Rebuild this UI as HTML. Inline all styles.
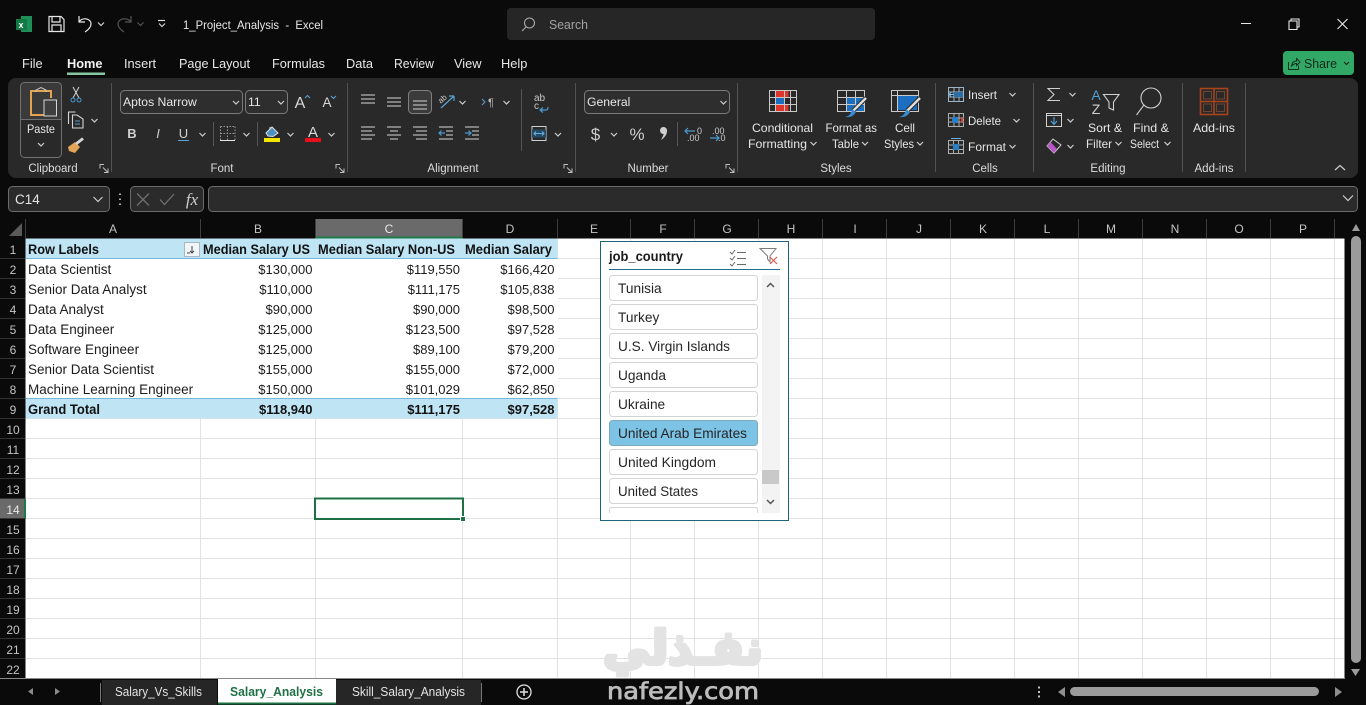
<!DOCTYPE html>
<html lang="en"><head><meta charset="utf-8"><title>1_Project_Analysis - Excel</title>
<style>
html,body{margin:0;padding:0;background:#0a0a0a;width:1366px;height:705px;overflow:hidden}
svg{display:block}
text{font-family:"Liberation Sans",sans-serif;font-size:12px;fill:#e6e6e6;white-space:pre}
.r{font-size:12.5px}
.g{fill:#dcdcdc;font-size:11.5px;text-anchor:middle}
.m{text-anchor:middle}
.e{text-anchor:end}
.tab{font-size:12.8px;fill:#e8e8e8}
.c{font-size:13.5px;fill:#1c1c1c}
.n{font-size:13px;fill:#1c1c1c;text-anchor:end}
.b{font-weight:bold;fill:#111}
.h{font-size:12px;fill:#c4c4c4;text-anchor:middle}
.s{font-size:13.7px;fill:#252525}
.ln{fill:none;stroke:#d6d6d6;stroke-width:1.1}
.bl{fill:none;stroke:#4a9ad0;stroke-width:1.2}
</style></head><body>
<svg width="1366" height="705" viewBox="0 0 1366 705" xmlns="http://www.w3.org/2000/svg">
<defs>
<path id="c" d="M-3-1.5 0 1.5 3-1.5" fill="none" stroke="#cfcfcf" stroke-width="1.2"/>
<path id="l" d="M-4 0V-4H0M-1-1 4 4M4 0V4H0" fill="none" stroke="#bdbdbd" stroke-width="1"/>
<path id="al" d="M-7 0H7M-7 4H7M-7 8H7" fill="none" stroke="#d6d6d6" stroke-width="1.1"/>
</defs>
<rect width="1366" height="705" fill="#0a0a0a"/>

<!-- title bar -->
<rect x="21" y="16" width="11" height="16" fill="#1f8f5a"/><rect x="16" y="19" width="11" height="11" fill="#127a44"/>
<text x="18.500" y="28" style="font-size:9px;font-weight:bold;fill:#fff">x</text>
<path d="M49 16.500H61L64 19.500V31.500H49ZM52 16.500V22H60V16.500M52 31.500V25H61V31.500" fill="none" stroke="#e6e6e6" stroke-width="1.2"/>
<path d="M79 16V22H85M79 22C82 17 91 18 91 24 91 27 88 30 85 32" fill="none" stroke="#e6e6e6" stroke-width="1.2"/>
<use href="#c" x="101" y="24"/>
<path d="M131 16V22H125M131 22C128 17 118 18 118 24 118 27 121 30 124 32" fill="none" stroke="#555" stroke-width="1.2"/>
<path d="M137.500 22.500 140.500 25.500 143.500 22.500" fill="none" stroke="#555" stroke-width="1.2"/>
<path d="M158 20.500H165" stroke="#ddd" stroke-width="1.2"/><use href="#c" x="162" y="25"/>
<text x="183" y="29" textLength="140" lengthAdjust="spacingAndGlyphs" style="font-size:12.300px;fill:#e8e8e8">1_Project_Analysis  -  Excel</text>
<rect x="507" y="8" width="368" height="32" rx="4" fill="#262626"/>
<circle cx="529.500" cy="23" r="5" fill="none" stroke="#a8a8a8" stroke-width="1.100"/><path d="M526 27 522 31" stroke="#a8a8a8" stroke-width="1.100"/>
<text x="549" y="29" textLength="39" lengthAdjust="spacingAndGlyphs" style="font-size:13px;fill:#a3a3a3">Search</text>
<path d="M1241 23.500H1251M1289 21H1297V29.500H1289ZM1291 21V19H1299V27H1297M1337.500 19 1347.500 29M1347.500 19 1337.500 29" fill="none" stroke="#e8e8e8" stroke-width="1.100"/>

<!-- tabs -->
<text x="22" y="68" class="tab">File</text>
<text x="67" y="68" class="tab" style="font-weight:bold;fill:#f2f2f2">Home</text>
<rect x="67" y="72.500" width="38" height="2.500" fill="#86c7a2"/>
<text x="124" y="68" class="tab">Insert</text>
<text x="179" y="68" class="tab" textLength="71" lengthAdjust="spacingAndGlyphs">Page Layout</text>
<text x="272" y="68" class="tab" textLength="53" lengthAdjust="spacingAndGlyphs">Formulas</text>
<text x="346" y="68" class="tab">Data</text>
<text x="394" y="68" class="tab" textLength="40" lengthAdjust="spacingAndGlyphs">Review</text>
<text x="454" y="68" class="tab">View</text>
<text x="501" y="68" class="tab">Help</text>
<rect x="1283" y="51" width="71" height="24" rx="4" fill="#31a866"/>
<path d="M1288.500 62V69.500H1298.500V65.500M1291.500 66C1292 62.500 1294 61 1296.500 61V58.500L1300 62 1296.500 65.500V63.500C1294.500 63.500 1293 64.500 1291.500 66Z" fill="none" stroke="#14301f" stroke-width="1"/>
<text x="1304" y="68" textLength="33" lengthAdjust="spacingAndGlyphs" style="font-size:13px;fill:#10271a">Share</text>
<path d="M1344 62 1346.500 64.500 1349 62" fill="none" stroke="#10271a" stroke-width="1.100"/>

<!-- ribbon -->
<rect x="8" y="78" width="1350" height="100" rx="8" fill="#292929"/>
<path d="M111.500 83V172M347.500 83V172M575.500 83V172M737.500 83V172M935.500 83V172M1033.500 83V172M1182.500 83V172M1245.500 83V172" stroke="#525252"/>

<!-- clipboard -->
<path d="M20 119.500V86Q20 82 24 82H58Q62 82 62 86V119.500Z" fill="#3a3a3a"/>
<rect x="20.500" y="82.500" width="41" height="75" rx="4" fill="none" stroke="#707070"/>
<path d="M20.500 119.500H61.500" stroke="#707070"/>
<path d="M44 115H31V91H51V98" fill="none" stroke="#e2a24f" stroke-width="2"/>
<path d="M36 92V90L41 87.500 46 90V92" fill="none" stroke="#cfcfcf"/>
<rect x="44" y="100" width="12.500" height="16" fill="#3f3f3f" stroke="#d5d5d5"/>
<text x="41" y="133" class="m" textLength="28" lengthAdjust="spacingAndGlyphs">Paste</text><use href="#c" x="41" y="144.500"/>
<path d="M73 87 79 98M79 87 73 98" stroke="#d4d4d4" fill="none"/><circle cx="73" cy="100" r="2" fill="none" stroke="#4a9ad0"/><circle cx="79" cy="100" r="2" fill="none" stroke="#4a9ad0"/>
<path d="M68.500 125V113H75.500M72.500 116H77L83 120V129H72.500Z" class="ln" transform="translate(0 -1)"/><path d="M75 121H80M75 124H80" stroke="#5b9bc9"/>
<use href="#c" x="94.500" y="120.500"/>
<path d="M68 147 75 142 80 147 75 153 69 151Z" fill="#e1a459"/><path d="M76 144 83 138.500" stroke="#d6d6d6" stroke-width="2.800"/>
<text x="53" y="172" class="g">Clipboard</text><use href="#l" x="104" y="168.500"/>

<!-- font -->
<rect x="120.500" y="90.500" width="122" height="23" rx="4" fill="#2e2e2e" stroke="#7a7a7a"/>
<text x="123" y="106" style="font-size:12.200px">Aptos Narrow</text><use href="#c" x="236" y="102.500"/>
<rect x="245.500" y="90.500" width="42" height="23" rx="4" fill="#2e2e2e" stroke="#7a7a7a"/>
<text x="248" y="106" style="font-size:12.200px">11</text><use href="#c" x="281" y="102.500"/>
<text x="300" y="108" class="m" style="font-size:16px;fill:#d8d8d8">A</text><path d="M305 98 307.500 95.500 310 98" fill="none" stroke="#5aa4d6"/>
<text x="327" y="107" class="m" style="font-size:13.500px;fill:#d8d8d8">A</text><path d="M331 96 333.500 98.500 336 96" fill="none" stroke="#5aa4d6"/>
<text x="132" y="138" class="m" style="font-size:13px;font-weight:bold;fill:#cfcfcf">B</text>
<text x="158" y="138" class="m" style="font-size:13px;font-style:italic;fill:#cfcfcf">I</text>
<text x="183.500" y="138" class="m" style="font-size:13px;fill:#cfcfcf">U</text><path d="M178 140.500H189" stroke="#5aa4d6"/>
<use href="#c" x="202.500" y="134.500"/>
<path d="M213.500 122V146M257.500 122V146" stroke="#555"/>
<path d="M220.500 126.500H235M220.500 126.500V140M235 126.500V140M227.500 126.500V140M220.500 133.500H235" fill="none" stroke="#999" stroke-dasharray="1.500 1.500"/><path d="M220 140.500H235" stroke="#e6e6e6"/>
<use href="#c" x="246.500" y="134.500"/>
<path d="M266 133 272 127 278 133 273 136.500 268 136Z" fill="#4c8fc0" stroke="#e0e0e0"/><path d="M270 129V127" stroke="#e0e0e0"/>
<rect x="264" y="138" width="16" height="4" fill="#f4e600"/>
<use href="#c" x="290.500" y="134.500"/>
<text x="313" y="137" class="m" style="font-size:15px;fill:#d8d8d8">A</text>
<rect x="305" y="138" width="16" height="4" fill="#e8101a"/>
<use href="#c" x="331.500" y="134.500"/>
<text x="222" y="172" class="g">Font</text><use href="#l" x="340" y="168.500"/>

<!-- alignment -->
<use href="#al" x="368" y="95"/>
<use href="#al" x="394" y="98"/>
<rect x="408.500" y="90.500" width="23" height="23" rx="4" fill="#3b3b3b" stroke="#808080"/>
<use href="#al" x="420" y="101"/>
<path d="M441 108 454 96M454 96H449M454 96V101" fill="none" stroke="#5aa4d6" stroke-width="1.200"/>
<text x="444" y="101" class="m" style="font-size:8px;fill:#ccc" transform="rotate(-40 444 101)">ab</text>
<use href="#c" x="462.500" y="102.500"/>
<path d="M482 99 485 102 482 105" fill="none" stroke="#5aa4d6"/><text x="491" y="106" class="m" style="font-size:11px;fill:#bbb">¶</text>
<use href="#c" x="506.500" y="102.500"/>
<path d="M361 127H375M361 131H372M361 135H375M361 139H372" class="ln"/>
<path d="M387 127H401M390 131H398M387 135H401M390 139H398" class="ln"/>
<path d="M413 127H427M416 131H427M413 135H427M416 139H427" class="ln"/>
<path d="M439 127H453M446 131H453M446 135H453M439 139H453" class="ln"/><path d="M445 133H439M441.500 130.500 439 133 441.500 135.500" class="bl"/>
<path d="M465 127H479M472 131H479M472 135H479M465 139H479" class="ln"/><path d="M465 133H471M468.500 130.500 471 133 468.500 135.500" class="bl"/>
<path d="M521.500 89V151" stroke="#555"/>
<text x="534" y="101" style="font-size:10px;fill:#c8c8c8">ab</text><text x="534" y="109" style="font-size:10px;fill:#c8c8c8">c</text>
<path d="M540 110H546Q548 110 548 107M543 107.500 540 110 543 112.500" class="bl"/>
<rect x="532" y="126.500" width="14" height="14" fill="none" stroke="#cfcfcf"/><rect x="532" y="129.500" width="14" height="8" fill="#264a63"/>
<path d="M534 133.500H544M536 131.500 534 133.500 536 135.500M542 131.500 544 133.500 542 135.500" fill="none" stroke="#64b0e4"/>
<use href="#c" x="558" y="134.500"/>
<text x="453" y="172" class="g">Alignment</text><use href="#l" x="568" y="168.500"/>

<!-- number -->
<rect x="584.500" y="90.500" width="145" height="23" rx="4" fill="#2e2e2e" stroke="#7a7a7a"/>
<text x="587" y="106" style="font-size:12.200px">General</text><use href="#c" x="723.500" y="102.500"/>
<text x="595.500" y="140" class="m" style="font-size:17px;fill:#cfcfcf">$</text><use href="#c" x="614" y="134.500"/>
<text x="637" y="140" class="m" style="font-size:17px;fill:#cfcfcf">%</text>
<path d="M660 130A3.500 3.500 0 1 1 667 131C667 135 664 138 661 140 662.500 137 663.500 135.500 663.500 134 661.500 134 660 132.500 660 130Z" fill="#cfcfcf"/>
<path d="M677.500 122V146" stroke="#555"/>
<text x="697" y="134" style="font-size:9px;fill:#ccc">0</text><text x="687" y="141" style="font-size:9px;fill:#ccc">.00</text>
<path d="M695 131H685M688 128 685 131 688 134" class="bl"/>
<text x="712" y="134" style="font-size:9px;fill:#ccc">.00</text><text x="718" y="141" style="font-size:9px;fill:#ccc">.0</text>
<path d="M710 138H719M716 135 719 138 716 141" class="bl"/>
<text x="648" y="172" class="g">Number</text><use href="#l" x="730" y="168.500"/>

<!-- styles -->
<rect x="775.500" y="90.500" width="13" height="7" fill="#e0352b"/><rect x="775.500" y="97.500" width="9" height="7" fill="#1c6ec0"/><rect x="775.500" y="104.500" width="13" height="7" fill="#e0352b"/>
<path d="M769.500 90.500H796.500V111.500H769.500ZM769.500 97.500H796.500M769.500 104.500H796.500M775.500 90.500V111.500M784.500 90.500V111.500M790.500 90.500V111.500" fill="none" stroke="#c9c9c9"/>
<text x="752" y="132" textLength="61" lengthAdjust="spacingAndGlyphs">Conditional</text><text x="748" y="148" textLength="59" lengthAdjust="spacingAndGlyphs">Formatting</text><use href="#c" x="813.500" y="143.500"/>
<rect x="846" y="97" width="19" height="15" fill="#1c6ec0"/>
<path d="M837.500 90.500H864.500V111.500H837.500ZM837.500 97.500H864.500M837.500 104.500H864.500M846.500 90.500V111.500M855.500 90.500V111.500" fill="none" stroke="#c9c9c9"/>
<path d="M853 111 866 98" stroke="#292929" stroke-width="4.500"/><path d="M853 111 866 98" stroke="#e0e0e0" stroke-width="2.400"/><path d="M845 117Q851 116 852 109L856 112Q853 118 845 117Z" fill="#3a8ad0"/>
<text x="825.500" y="132" textLength="51.500" lengthAdjust="spacingAndGlyphs">Format as</text><text x="832" y="148" textLength="27" lengthAdjust="spacingAndGlyphs">Table</text><use href="#c" x="865" y="143.500"/>
<rect x="897" y="95" width="20" height="15" fill="#1c6ec0"/>
<path d="M891.500 90.500H918.500V111.500H891.500ZM891.500 95.500H918.500M897.500 90.500V111.500" fill="none" stroke="#c9c9c9"/>
<path d="M907 111 920 98" stroke="#292929" stroke-width="4.500"/><path d="M907 111 920 98" stroke="#e0e0e0" stroke-width="2.400"/><path d="M899 117Q905 116 906 109L910 112Q907 118 899 117Z" fill="#3a8ad0"/>
<text x="895" y="132" textLength="20" lengthAdjust="spacingAndGlyphs">Cell</text><text x="884" y="148" textLength="30" lengthAdjust="spacingAndGlyphs">Styles</text><use href="#c" x="920" y="143.500"/>
<text x="836" y="172" class="g">Styles</text>

<!-- cells -->
<path d="M948.500 87.500H963.500V101.500H948.500ZM948.500 92H963.500M948.500 97H963.500M954 87.500V101.500M959 87.500V101.500" fill="none" stroke="#9fb4c4"/><rect x="954" y="92" width="9" height="5" fill="#2a6fa8"/><path d="M954 94.500H949M951 92.500 949 94.500 951 96.500" fill="none" stroke="#7cc0ee"/>
<text x="968" y="99" textLength="29" lengthAdjust="spacingAndGlyphs">Insert</text><use href="#c" x="1012.500" y="94.500"/>
<path d="M948.500 113.500H963.500V126.500H948.500ZM948.500 118H963.500M948.500 122H963.500M954 113.500V126.500M959 113.500V126.500" fill="none" stroke="#b0b0b0"/><rect x="952" y="117" width="6" height="6" fill="#2a7fc4"/><path d="M960 117.500 964 122.500M964 117.500 960 122.500" stroke="#d8453e"/>
<text x="968" y="125" textLength="33" lengthAdjust="spacingAndGlyphs">Delete</text><use href="#c" x="1016.500" y="120.500"/>
<path d="M948.500 140.500H963.500V153.500H948.500ZM948.500 145H963.500M948.500 149.500H963.500M953.500 140.500V153.500M958.500 140.500V153.500" fill="none" stroke="#b0b0b0"/><rect x="953" y="144" width="6" height="6" fill="#2a7fc4"/><path d="M951 138.500H961" stroke="#6ab0e0"/>
<text x="968" y="151" textLength="38" lengthAdjust="spacingAndGlyphs">Format</text><use href="#c" x="1012.500" y="146.500"/>
<text x="985" y="172" class="g">Cells</text>

<!-- editing -->
<path d="M1060 88.500H1048L1054 94.500 1048 100.500H1060" fill="none" stroke="#cfcfcf" stroke-width="1.100"/><use href="#c" x="1072.500" y="94.500"/>
<rect x="1046.500" y="113.500" width="15" height="13" fill="none" stroke="#cfcfcf"/><path d="M1046.500 115.500H1061.500" stroke="#cfcfcf"/><path d="M1054 117V124M1051 121 1054 124.500 1057 121" class="bl"/><use href="#c" x="1070.500" y="120.500"/>
<path d="M1047 146 1053 139 1061 145 1054 153Z" fill="none" stroke="#cfcfcf"/><path d="M1047 146 1050.500 142 1057 149 1054 153Z" fill="#b956c8"/><use href="#c" x="1070.500" y="146.500"/>
<text x="1096" y="100" class="m" style="font-size:14px;fill:#4f9fd8">A</text><text x="1096" y="114" class="m" style="font-size:14px;fill:#cfcfcf">Z</text>
<path d="M1103.500 94.500H1119L1113.500 102V110L1109 108V102Z" fill="none" stroke="#cfcfcf" stroke-width="1.100"/>
<text x="1088" y="132" textLength="34" lengthAdjust="spacingAndGlyphs">Sort &amp;</text><text x="1086" y="148" textLength="26" lengthAdjust="spacingAndGlyphs">Filter</text><use href="#c" x="1118.500" y="143.500"/>
<circle cx="1151" cy="98" r="10" fill="none" stroke="#cfcfcf" stroke-width="1.100"/><path d="M1144 105 1136.500 115" stroke="#cfcfcf" stroke-width="1.100"/>
<text x="1133" y="132" textLength="36" lengthAdjust="spacingAndGlyphs">Find &amp;</text><text x="1130" y="148" textLength="29" lengthAdjust="spacingAndGlyphs">Select</text><use href="#c" x="1167.500" y="143.500"/>
<text x="1108" y="172" class="g">Editing</text>

<!-- addins -->
<rect x="1200.500" y="88.500" width="27" height="26" fill="none" stroke="#a8431c" stroke-width="1.600"/>
<path d="M1214 88.500V114.500M1200.500 101.500H1227.500" stroke="#a8431c" stroke-width="1.600"/>
<rect x="1203.500" y="91.500" width="8" height="7.500" fill="none" stroke="#6e4535"/><rect x="1216.500" y="91.500" width="8" height="7.500" fill="none" stroke="#6e4535"/><rect x="1203.500" y="104" width="8" height="7.500" fill="none" stroke="#6e4535"/><rect x="1216.500" y="104" width="8" height="7.500" fill="none" stroke="#6e4535"/>
<text x="1193" y="132" textLength="42" lengthAdjust="spacingAndGlyphs">Add-ins</text><text x="1214" y="172" class="g">Add-ins</text>
<path d="M1335 170 1340 165.500 1345 170" fill="none" stroke="#d0d0d0" stroke-width="1.200"/>

<!-- formula bar -->
<rect x="8.500" y="186.500" width="101" height="25" rx="4" fill="#2b2b2b" stroke="#6b6b6b"/>
<text x="15" y="204" style="font-size:13.500px;fill:#e4e4e4">C14</text>
<path d="M93.500 197 98 201.500 102.500 197" fill="none" stroke="#cfcfcf" stroke-width="1.200"/>
<path d="M120 193.500V195M120 198.500V200M120 203.500V205" stroke="#d8d8d8" stroke-width="1.600"/>
<rect x="130.500" y="186.500" width="73" height="25" rx="4" fill="#2b2b2b" stroke="#6b6b6b"/>
<path d="M137 193.500 149 205.500M149 193.500 137 205.500M160 199.500 164.500 204.500 174 194" fill="none" stroke="#6f6f6f" stroke-width="1.300"/>
<text x="192" y="205" class="m" style="font-family:'Liberation Serif',serif;font-size:17px;font-style:italic;fill:#cfcfcf">fx</text>
<rect x="208.500" y="186.500" width="1149" height="25" rx="4" fill="#2b2b2b" stroke="#6b6b6b"/>
<path d="M1343 195.500 1348 200.500 1353 195.500" fill="none" stroke="#cfcfcf" stroke-width="1.200"/>

<!-- sheet -->
<rect x="25.500" y="238.500" width="1319" height="440" fill="#fff"/>
<path d="M26 258.500H1344M26 278.500H1344M26 298.500H1344M26 318.500H1344M26 338.500H1344M26 358.500H1344M26 378.500H1344M26 398.500H1344M26 418.500H1344M26 438.500H1344M26 458.500H1344M26 478.500H1344M26 498.500H1344M26 518.500H1344M26 538.500H1344M26 558.500H1344M26 578.500H1344M26 598.500H1344M26 618.500H1344M26 638.500H1344M26 658.500H1344M200.500 239V679M315.500 239V679M462.500 239V679M557.500 239V679M630.500 239V679M694.500 239V679M758.500 239V679M822.500 239V679M886.500 239V679M950.500 239V679M1014.500 239V679M1078.500 239V679M1142.500 239V679M1206.500 239V679M1270.500 239V679M1334.500 239V679" stroke="#e2e2e2" fill="none"/>
<rect x="26" y="259" width="532" height="140" fill="#fff"/>
<rect x="25.500" y="238.500" width="532" height="20" fill="#bfe4f4"/><path d="M26 258.500H557.500" stroke="#72b9da"/>
<rect x="25.500" y="398.500" width="532" height="20" fill="#bfe4f4"/><path d="M26 398.500H557.500" stroke="#72b9da"/>

<!-- col headers -->
<rect x="0" y="219" width="1346" height="19.500" fill="#0a0a0a"/>
<rect x="315" y="219" width="148" height="18.500" fill="#6a6a6a"/><rect x="315" y="236.500" width="148" height="2" fill="#1f7a4a"/>
<path d="M22 223V236H9Z" fill="#5a5a5a"/>
<path d="M25.500 219V239M200.500 219V238M315.500 219V238M462.500 219V238M557.500 219V238M630.500 219V238M694.500 219V238M758.500 219V238M822.500 219V238M886.500 219V238M950.500 219V238M1014.500 219V238M1078.500 219V238M1142.500 219V238M1206.500 219V238M1270.500 219V238M1334.500 219V238" stroke="#3d3d3d"/>
<text x="113" y="233" class="h">A</text><text x="258" y="233" class="h">B</text><text x="389" y="233" class="h" style="fill:#e8e8e8">C</text><text x="510" y="233" class="h">D</text><text x="594" y="233" class="h">E</text><text x="663" y="233" class="h">F</text><text x="727" y="233" class="h">G</text><text x="791" y="233" class="h">H</text><text x="855" y="233" class="h">I</text><text x="919" y="233" class="h">J</text><text x="983" y="233" class="h">K</text><text x="1047" y="233" class="h">L</text><text x="1111" y="233" class="h">M</text><text x="1175" y="233" class="h">N</text><text x="1239" y="233" class="h">O</text><text x="1303" y="233" class="h">P</text>

<!-- row headers -->
<rect x="0" y="239" width="25.500" height="440" fill="#0a0a0a"/>
<rect x="0" y="499" width="24" height="20" fill="#6a6a6a"/><rect x="24" y="499" width="2" height="20" fill="#1f7a4a"/>
<path d="M0 258.500H25M0 278.500H25M0 298.500H25M0 318.500H25M0 338.500H25M0 358.500H25M0 378.500H25M0 398.500H25M0 418.500H25M0 438.500H25M0 458.500H25M0 478.500H25M0 498.500H25M0 518.500H25M0 538.500H25M0 558.500H25M0 578.500H25M0 598.500H25M0 618.500H25M0 638.500H25M0 658.500H25" stroke="#333"/>
<text x="13" y="254" class="h">1</text><text x="13" y="274" class="h">2</text><text x="13" y="294" class="h">3</text><text x="13" y="314" class="h">4</text><text x="13" y="334" class="h">5</text><text x="13" y="354" class="h">6</text><text x="13" y="374" class="h">7</text><text x="13" y="394" class="h">8</text><text x="13" y="414" class="h">9</text><text x="13" y="434" class="h">10</text><text x="13" y="454" class="h">11</text><text x="13" y="474" class="h">12</text><text x="13" y="494" class="h">13</text><text x="13" y="514" class="h" style="fill:#e8e8e8">14</text><text x="13" y="534" class="h">15</text><text x="13" y="554" class="h">16</text><text x="13" y="574" class="h">17</text><text x="13" y="594" class="h">18</text><text x="13" y="614" class="h">19</text><text x="13" y="634" class="h">20</text><text x="13" y="654" class="h">21</text><text x="13" y="674" class="h">22</text>

<!-- pivot -->
<text x="28" y="254" class="c b" textLength="71" lengthAdjust="spacingAndGlyphs">Row Labels</text>
<rect x="184.500" y="242.500" width="15" height="14" fill="#f0f5f8" stroke="#a9b8c2"/><path d="M192 246V253M190 251 192 253 194 251M187 253H190" fill="none" stroke="#444"/>
<text x="203" y="254" class="c b" textLength="107" lengthAdjust="spacingAndGlyphs">Median Salary US</text>
<text x="318" y="254" class="c b" textLength="137" lengthAdjust="spacingAndGlyphs">Median Salary Non-US</text>
<text x="465" y="254" class="c b" textLength="87" lengthAdjust="spacingAndGlyphs">Median Salary</text>
<text x="28" y="274" class="c">Data Scientist</text><text x="312.500" y="274" class="n">$130,000</text><text x="460" y="274" class="n">$119,550</text><text x="554.500" y="274" class="n">$166,420</text>
<text x="28" y="294" class="c">Senior Data Analyst</text><text x="312.500" y="294" class="n">$110,000</text><text x="460" y="294" class="n">$111,175</text><text x="554.500" y="294" class="n">$105,838</text>
<text x="28" y="314" class="c">Data Analyst</text><text x="312.500" y="314" class="n">$90,000</text><text x="460" y="314" class="n">$90,000</text><text x="554.500" y="314" class="n">$98,500</text>
<text x="28" y="334" class="c">Data Engineer</text><text x="312.500" y="334" class="n">$125,000</text><text x="460" y="334" class="n">$123,500</text><text x="554.500" y="334" class="n">$97,528</text>
<text x="28" y="354" class="c">Software Engineer</text><text x="312.500" y="354" class="n">$125,000</text><text x="460" y="354" class="n">$89,100</text><text x="554.500" y="354" class="n">$79,200</text>
<text x="28" y="374" class="c">Senior Data Scientist</text><text x="312.500" y="374" class="n">$155,000</text><text x="460" y="374" class="n">$155,000</text><text x="554.500" y="374" class="n">$72,000</text>
<text x="28" y="394" class="c">Machine Learning Engineer</text><text x="312.500" y="394" class="n">$150,000</text><text x="460" y="394" class="n">$101,029</text><text x="554.500" y="394" class="n">$62,850</text>
<text x="28" y="414" class="c b" textLength="72" lengthAdjust="spacingAndGlyphs">Grand Total</text><text x="312.500" y="414" class="n b">$118,940</text><text x="460" y="414" class="n b">$111,175</text><text x="554.500" y="414" class="n b">$97,528</text>

<!-- selection -->
<rect x="315" y="498.500" width="148" height="20.500" fill="none" stroke="#1f7145" stroke-width="2"/>
<rect x="460.500" y="516.500" width="5" height="5" fill="#1f7145" stroke="#fff"/>

<!-- slicer -->
<rect x="600.500" y="241.500" width="188" height="279" fill="#fff" stroke="#1e6379"/>
<text x="609" y="261" textLength="74" lengthAdjust="spacingAndGlyphs" style="font-size:13.500px;font-weight:bold;fill:#1a1a1a">job_country</text>
<path d="M609 269.500H780" stroke="#1e6f8d"/>
<path d="M730 252 732 254 735 250M730 258 732 260 735 256M730 264 732 266 735 262M737 252.500H746M737 258.500H746M737 264.500H746" fill="none" stroke="#6a6a6a"/>
<path d="M760 248.500H776L770 256V262L767.500 259V256Z" fill="none" stroke="#7a7a7a"/>
<path d="M770 257 777 264M777 257 770 264" stroke="#e05a4e" stroke-width="1.200"/>
<rect x="762" y="275" width="18" height="238" fill="#f3f3f3"/>
<rect x="762" y="470" width="17" height="14" fill="#c9c9c9"/>
<path d="M767 287 770.500 283.500 774 287M767 500 770.500 503.500 774 500" fill="none" stroke="#555" stroke-width="1.500"/>
<g fill="#fff" stroke="#d4d4d4">
<rect x="609.500" y="275.500" width="148" height="25" rx="3"/>
<rect x="609.500" y="304.500" width="148" height="25" rx="3"/>
<rect x="609.500" y="333.500" width="148" height="25" rx="3"/>
<rect x="609.500" y="362.500" width="148" height="25" rx="3"/>
<rect x="609.500" y="391.500" width="148" height="25" rx="3"/>
<rect x="609.500" y="420.500" width="148" height="25" rx="3" fill="#7cc3e6" stroke="#7fa9bd"/>
<rect x="609.500" y="449.500" width="148" height="25" rx="3"/>
<rect x="609.500" y="478.500" width="148" height="25" rx="3"/>
<path d="M609.500 513V510Q609.500 507.500 612 507.500H755Q757.500 507.500 757.500 510V513"/>
</g>
<text x="618" y="293" class="s">Tunisia</text>
<text x="618" y="322" class="s">Turkey</text>
<text x="618" y="351" class="s" textLength="112" lengthAdjust="spacingAndGlyphs">U.S. Virgin Islands</text>
<text x="618" y="380" class="s">Uganda</text>
<text x="618" y="409" class="s">Ukraine</text>
<text x="618" y="438" class="s" textLength="129" lengthAdjust="spacingAndGlyphs">United Arab Emirates</text>
<text x="618" y="467" class="s" textLength="98" lengthAdjust="spacingAndGlyphs">United Kingdom</text>
<text x="618" y="496" class="s" textLength="80" lengthAdjust="spacingAndGlyphs">United States</text>

<!-- bottom bar -->
<rect x="0" y="679" width="1366" height="26" fill="#0a0a0a"/>
<path d="M0 678.500H1345" stroke="#8a8a8a"/>
<path d="M33 688V695L28 691.500ZM55 688V695L60 691.500Z" fill="#8a8a8a"/>
<path d="M100.500 683V702M481.500 683V702" stroke="#777"/>
<rect x="102" y="680" width="115" height="25" fill="#262626"/>
<rect x="336" y="680" width="145" height="25" fill="#262626"/>
<rect x="218" y="679" width="118" height="25" fill="#fff"/><rect x="218" y="702.500" width="118" height="2" fill="#1f7145"/>
<text x="115" y="696" textLength="87" lengthAdjust="spacingAndGlyphs" style="font-size:12.800px;fill:#e4e4e4">Salary_Vs_Skills</text>
<text x="230" y="696" textLength="93" lengthAdjust="spacingAndGlyphs" style="font-size:12.800px;font-weight:bold;fill:#1f7145">Salary_Analysis</text>
<text x="352" y="696" textLength="113" lengthAdjust="spacingAndGlyphs" style="font-size:12.800px;fill:#e4e4e4">Skill_Salary_Analysis</text>
<circle cx="524" cy="692" r="7" fill="none" stroke="#e0e0e0" stroke-width="1.300"/><path d="M520 692H528M524 688V696" stroke="#e0e0e0" stroke-width="1.500"/>

<!-- watermark -->
<text x="683" y="664" class="m" direction="rtl" style="font-family:'DejaVu Sans',sans-serif;font-size:47px;font-weight:bold;fill:#e3e3e3;stroke:#e3e3e3;stroke-width:4;stroke-linejoin:round">نفـذلي</text>
<text x="607" y="699" textLength="152" lengthAdjust="spacingAndGlyphs" style="font-family:'DejaVu Sans',sans-serif;font-size:23px;fill:#bcbcbc;stroke:#bcbcbc;stroke-width:.8">nafezly.com</text>

<!-- scrollbars -->
<path d="M1039 686.500V688.500M1039 691V693M1039 695.500V697.500" stroke="#d8d8d8" stroke-width="1.800"/>
<path d="M1065 687V697L1058 692ZM1335 687V697L1342 692Z" fill="#8f8f8f"/>
<rect x="1070" y="687" width="249" height="9" rx="4.500" fill="#9b9b9b"/>
<path d="M1352 231 1356 224 1360 231ZM1351 669 1355.500 676 1360 669Z" fill="#9b9b9b"/>
<rect x="1351" y="236" width="10" height="427" rx="5" fill="#9b9b9b"/>
</svg>
</body></html>
